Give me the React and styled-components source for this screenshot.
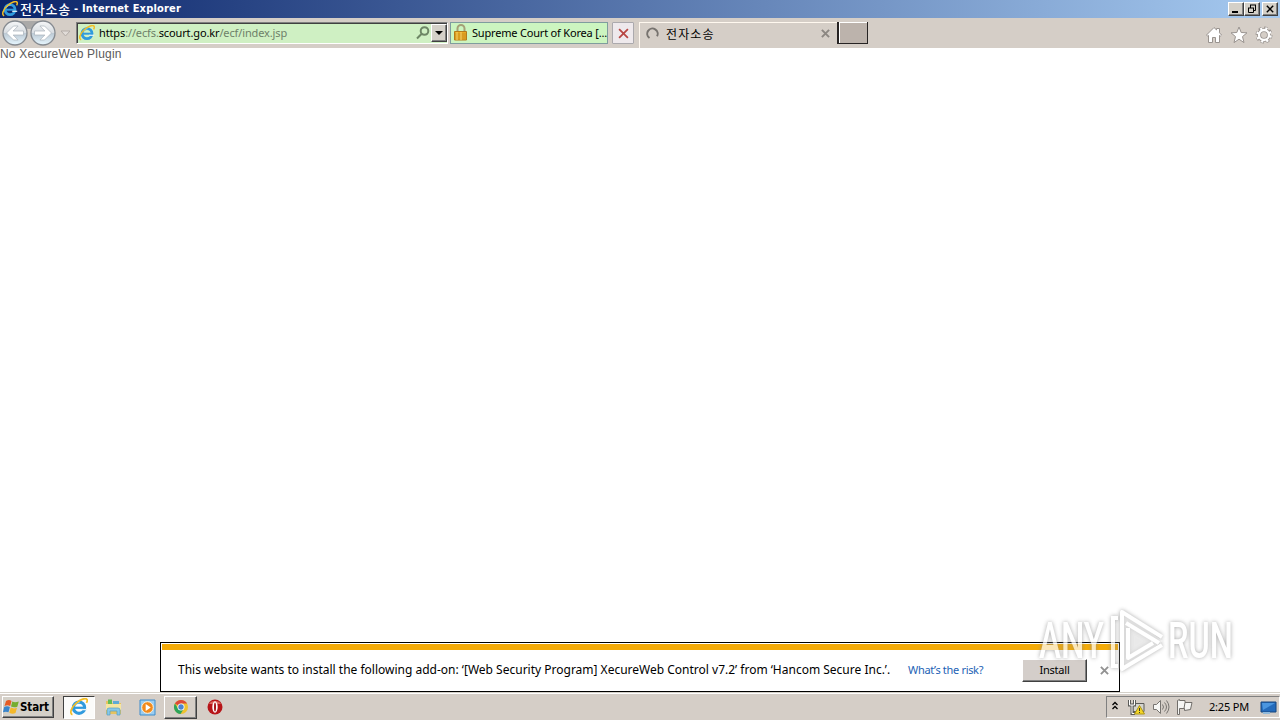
import React from 'react';
import styled, { createGlobalStyle } from 'styled-components';

const uiFont = '"DejaVu Sans Condensed", "DejaVu Sans", "Noto Sans CJK KR", sans-serif';
const textFont = '"Noto Sans", "Noto Sans CJK KR", sans-serif';

const GlobalStyle = createGlobalStyle`
  * {
    box-sizing: border-box;
  }
  body {
    margin: 0;
    overflow: hidden;
    background: #fff;
  }
  button {
    padding: 0;
    font: inherit;
  }
  svg {
    display: block;
    flex: none;
  }
`;

const Screen = styled.div`
  position: relative;
  display: flex;
  flex-direction: column;
  width: 1280px;
  height: 720px;
  overflow: hidden;
  color: #000;
  font: 11px/14px ${textFont};
  white-space: nowrap;
`;

const TitleBar = styled.header`
  display: flex;
  align-items: center;
  flex: none;
  height: 18px;
  padding: 0 2px;
  background: linear-gradient(90deg, #0a246a, #a6caf0);
`;

const Title = styled.h1`
  display: flex;
  flex: 1;
  margin: 0 0 0 2px;
  color: #fff;
  font: bold 11px/18px ${uiFont};
`;

const KoreanTitle = styled.span`
  width: 54px;
  font: 500 13px/17px "Noto Sans CJK KR", sans-serif;
  letter-spacing: 0.8px;
`;

const TitleText = styled.span`
  letter-spacing: ${({ $spacing }) => $spacing}px;
`;

const CaptionButton = styled.button`
  display: grid;
  place-items: center;
  width: 16px;
  height: 14px;
  margin-left: ${({ $gap }) => ($gap ? 2 : 0)}px;
  border: 1px solid;
  border-color: #fff #404040 #404040 #fff;
  background: #d4d0c8;
  box-shadow: inset -1px -1px #808080;
`;

const Toolbar = styled.nav`
  display: flex;
  align-items: center;
  flex: none;
  height: 30px;
  padding: 0 7px 0 2px;
  background: #d5cec7;
`;

const NavButtons = styled.div`
  width: 74px;
  height: 30px;
`;

const AddressBar = styled.div`
  display: flex;
  align-items: center;
  width: 372px;
  height: 22px;
  padding-left: 2px;
  border: 1px solid;
  border-color: #808080 #fff #fff #808080;
  background: #cff0c3;
  box-shadow: inset 1px 1px #404040;
`;

const Url = styled.span`
  flex: 1;
  margin-left: 4px;
  color: #6e7f69;
  font: 11px/16px ${textFont};
  letter-spacing: ${({ $spacing }) => $spacing}px;

  b {
    color: #000;
    font-weight: 400;
  }
`;

const DropButton = styled(CaptionButton)`
  width: 16px;
  height: 18px;
  margin-left: 1px;
`;

const Certificate = styled.div`
  display: flex;
  align-items: center;
  width: 158px;
  height: 22px;
  margin-left: 2px;
  padding-left: 2px;
  border: 1px solid #7f9d9e;
  background: #ccf5c0;
`;

const CertificateText = styled.span`
  margin-left: 3px;
  letter-spacing: ${({ $spacing }) => $spacing}px;
`;

const StopButton = styled.button`
  display: grid;
  place-items: center;
  width: 22px;
  height: 22px;
  margin: 0 5px 0 4px;
  border: 1px solid #aba9ad;
  border-radius: 1px;
  background: #eee9ec;
`;

const Tab = styled.div`
  display: flex;
  align-items: center;
  align-self: flex-end;
  width: 198px;
  height: 26px;
  padding: 0 7px 4px 6px;
  border-top: 1px solid #fff8ef;
  border-left: 1px solid #fff8ef;
`;

const TabTitle = styled.span`
  flex: 1;
  margin-left: 7px;
  font: 12px/16px "Noto Sans CJK KR", sans-serif;
  letter-spacing: 1.1px;
`;

const NewTab = styled.button`
  width: 31px;
  height: 22px;
  border: solid #262323;
  border-width: 0 1px 1px 2px;
  background: #bcb3ac;
  box-shadow: inset 1px 1px #fff;
`;

const Commands = styled.div`
  display: flex;
  gap: 7px;
  margin: 3px 0 0 auto;
`;

const Page = styled.main`
  flex: 1;
  color: #5b5b5b;
  font: 12px/12px "Liberation Sans", sans-serif;
  letter-spacing: 0.2px;
`;

const Notification = styled.section`
  width: 960px;
  height: 50px;
  margin: 0 auto;
  padding: 1px;
  border: 1px solid #000;
  background: #fff;
`;

const Stripe = styled.div`
  height: 6px;
  background: #f4ab08;
`;

const NotificationRow = styled.div`
  display: flex;
  align-items: center;
  height: 40px;
  padding-left: 16px;
`;

const Message = styled.span`
  width: 730px;
  padding-bottom: 1px;
  font: 12px/18px ${textFont};
  letter-spacing: ${({ $spacing }) => $spacing}px;
`;

const Risk = styled.a`
  width: 114px;
  color: #1d62b5;
  font: 11px/16px ${textFont};
  letter-spacing: ${({ $spacing }) => $spacing}px;
`;

const InstallButton = styled.button`
  width: 65px;
  height: 23px;
  margin-right: 13px;
  border: 1px solid;
  border-color: #fff #404040 #404040 #fff;
  background: #d4ceca;
  box-shadow: inset -1px -1px #808080;
  font: 11px/16px ${textFont};
  letter-spacing: -0.2px;
`;

const Taskbar = styled.footer`
  display: flex;
  align-items: center;
  flex: none;
  height: 28px;
  padding-top: 1px;
  border-top: 1px solid #d4d0c8;
  background: #d5cec7;
  box-shadow: inset 0 1px #fff;
`;

const StartButton = styled.button`
  display: flex;
  align-items: center;
  width: 52px;
  height: 22px;
  margin: 0 9px 0 2px;
  padding-left: 0;
  border: 1px solid;
  border-color: #fff #404040 #404040 #fff;
  background: #d4d0c8;
  box-shadow: inset -1px -1px #808080;
  font: bold 11.5px/16px ${uiFont};
  letter-spacing: -0.1px;
`;

const TaskButton = styled.button`
  display: grid;
  place-items: center;
  width: ${({ $width }) => $width}px;
  height: 23px;
  border: 1px solid transparent;
  background: none;
  ${({ $state }) => $state === 'active' && `
    border-color: #404040 #fff #fff #404040;
    background: #fbfbfa;
  `}
  ${({ $state }) => $state === 'open' && `
    border-color: #fff #404040 #404040 #fff;
    box-shadow: inset -1px -1px #808080;
  `}
`;

const Tray = styled.div`
  display: flex;
  align-items: center;
  width: 174px;
  height: 22px;
  margin-left: auto;
  padding-left: 4px;
  border: 1px solid;
  border-color: #808080 #fff #fff #808080;
`;

const Clock = styled.time`
  width: 51px;
  margin-left: 16px;
  letter-spacing: ${({ $spacing }) => $spacing}px;
`;

const Watermark = styled.svg`
  position: absolute;
  top: 602px;
  left: 1030px;
  opacity: 0.72;
  filter: drop-shadow(0 0 2px #888);
`;

const IeIcon = ({ size = 16 }) => (
  <svg width={size} height={size} viewBox="0 0 16 16" fill="none">
    <circle cx="8" cy="8.6" r="5" stroke="#2f9ade" strokeWidth="2.8" />
    <path d="M4 8.7h9.5" stroke="#2f9ade" strokeWidth="2" />
    <path d="M10.2 10.3h5" stroke="#e5f3f7" strokeWidth="1.2" />
    <path d="M4.4 6.3C5.4 4.6 7 3.8 8.5 3.9" stroke="#94dbff" />
    <path d="M2.2 14.8C-.7 14 1 8.3 5.5 4.5 9.3 1.2 14-.5 15.1 1.3c.5.8.1 2-.5 3.1" stroke="#f3bd24" strokeWidth="1.5" />
  </svg>
);

const NavIcon = () => (
  <svg width="74" height="30" viewBox="0 0 74 30">
    <defs>
      <linearGradient id="glass" x2="0" y2="1">
        <stop stopColor="#f6f7f8" />
        <stop offset=".48" stopColor="#d8dde2" />
        <stop offset=".52" stopColor="#bdcad5" />
        <stop offset="1" stopColor="#e7f7ff" />
      </linearGradient>
    </defs>
    <path d="M13 3h29v6q-14 4-29 0z" fill="#aaa9a8" />
    <circle cx="13" cy="15" r="12" fill="url(#glass)" stroke="#858a90" strokeWidth="1.3" />
    <circle cx="41" cy="15" r="12" fill="url(#glass)" stroke="#858a90" strokeWidth="1.3" />
    <g fill="#fff" stroke="#a9b1ba" strokeWidth=".7">
      <path d="M4.500 15l7-7h4.600l-5 5H21.500v4H11.100l5 5H11.500z" />
      <path d="M49.500 15l-7-7h-4.600l5 5H32.500v4h10.400l-5 5h4.600z" />
    </g>
    <path d="M59 13h9l-4.500 5z" fill="#e1dcd8" stroke="#b3aca7" />
  </svg>
);

const Cross = ({ size, color, width = 2 }) => (
  <svg width={size} height={size} viewBox="0 0 10 10">
    <path d="M1 1l8 8M9 1L1 9" stroke={color} strokeWidth={width} />
  </svg>
);

const LockIcon = () => (
  <svg width="16" height="18" viewBox="0 0 16 18">
    <path d="M4.500 8V4.500a3.500 3.500 0 017 0V8" fill="none" stroke="#a5a076" strokeWidth="2" />
    <path d="M1.500 7.500h12V16h-12z" fill="#e9aa22" stroke="#b47b19" />
    <path d="M2 10h11M2 12h11M2 14h11" stroke="#bd841c" strokeWidth=".7" />
    <path d="M4 8v8M8 8v8" stroke="#f9d56d" />
  </svg>
);

const CommandIcons = () => (
  <Commands>
    <svg width="18" height="18" viewBox="0 0 18 18">
      <path d="M1.500 9L9 1.500l2.500 2.400V2.500h3v4.300L16.500 9l-1.200 1.200-.8-.8v7.100h-4v-5h-3v5h-4V9.400l-.8.8z" fill="#fff" stroke="#99938f" />
    </svg>
    <svg width="18" height="18" viewBox="0 0 18 18">
      <path d="M9 1l2.200 5.500 5.800.3-4.500 3.800 1.500 6L9 13.200l-5 3.400 1.500-6L1 6.800l5.800-.3z" fill="#fff" stroke="#99938f" />
    </svg>
    <svg width="18" height="18" viewBox="0 0 18 18" fill="none">
      <circle cx="9" cy="9" r="6.700" stroke="#99938f" strokeWidth="3.500" strokeDasharray="3 2.260" />
      <circle cx="9" cy="9" r="5" stroke="#99938f" strokeWidth="4" />
      <circle cx="9" cy="9" r="6.500" stroke="#fff" strokeWidth="2.600" strokeDasharray="2 3.105" strokeDashoffset="-.5" />
      <circle cx="9" cy="9" r="5" stroke="#fff" strokeWidth="2.300" />
    </svg>
  </Commands>
);

const WindowsIcon = () => (
  <svg width="17" height="17" viewBox="0 0 17 17">
    <path d="M3 2q3-2 5.500-.1L7.200 7Q4.600 5.500 1.500 7z" fill="#e65b24" />
    <path d="M9.300 2.500Q12 4 15.800 2.400L14.300 7.800Q11 9 8 7.500z" fill="#75ad30" />
    <path d="M1.200 8q3-1.500 5.700.1l-1.400 5.200Q3 12-.1 13.300z" fill="#3a85cb" />
    <path d="M7.700 8.600q3 1.500 6.300.2l-1.500 5.300q-3.300 1.300-6.200-.4z" fill="#f4b82a" />
  </svg>
);

const FolderIcon = () => (
  <svg width="17" height="18" viewBox="0 0 17 18">
    <path d="M1 3h5l1 2h9v11H1z" fill="#e7c35f" />
    <path d="M3 1.500h4V6H3z" fill="#63bd55" />
    <path d="M8 3h6v4H8z" fill="#5eabd6" />
    <path d="M1 6h15v6H1z" fill="#f6e6a0" />
    <path d="M2 17v-5q0-2 2-2h9q2 0 2 2v5h-3v-4H5v4z" fill="#87c8e8" stroke="#559fc4" strokeWidth=".7" />
  </svg>
);

const PlayerIcon = () => (
  <svg width="17" height="17" viewBox="0 0 17 17">
    <path d="M1 1h15v15H1z" fill="#9bcdf0" stroke="#3e8dcc" />
    <circle cx="8.500" cy="8.500" r="5.800" fill="#f28a1b" stroke="#fff1d9" />
    <path d="M6.700 5v7l5-3.500z" fill="#fff" />
  </svg>
);

const ChromeIcon = () => (
  <svg width="16" height="16" viewBox="0 0 16 16">
    <circle cx="8" cy="8" r="7" fill="#efc22f" />
    <path d="M8 8L1.900 4.500A7 7 0 0114.100 4.500H8z" fill="#dc4939" />
    <path d="M1.900 4.500A7 7 0 007.500 15L11 9.500 8 8 5 9.500z" fill="#2da45b" />
    <circle cx="8" cy="8" r="3.500" fill="#fff" />
    <circle cx="8" cy="8" r="2.700" fill="#4c84d1" />
  </svg>
);

const OperaIcon = () => (
  <svg width="16" height="16" viewBox="0 0 16 16">
    <circle cx="8" cy="8" r="7.500" fill="#b71519" />
    <path d="M2 5a6.500 5 0 0112 0z" fill="#dd6860" />
    <ellipse cx="8" cy="8" rx="2.700" ry="5.800" fill="#fff" />
    <ellipse cx="8" cy="8" rx="1" ry="4.500" fill="#a61418" />
  </svg>
);

const TrayIcons = () => (
  <svg width="82" height="18" viewBox="0 0 82 18" fill="none">
    <path d="M1.500 7l2.500-2.500L6.500 7M1.500 11L4 8.500 6.500 11" stroke="#000" strokeWidth="1.300" />
    <path d="M22 5.500h11v8H22z" fill="#d4d4ce" stroke="#5b5b58" />
    <path d="M18.500 2v5h5V2M21 7v8.500h3" stroke="#5b5b58" strokeWidth="3" />
    <path d="M18.500 2v5h5V2M21 7v8.500h3" stroke="#fff" />
    <path d="M28.500 7.500l5 8.500h-10z" fill="#f4d525" stroke="#ad9519" />
    <path d="M28.500 10v3M28.500 14v1" stroke="#3b3825" />
    <path d="M42.500 6.500h3l4-4v13l-4-4h-3z" fill="#f7f7f5" stroke="#777470" />
    <path d="M51.500 6.500q2 2.500 0 5M53.500 4.500q4 4.500 0 9M55.500 2.500q5 6.500 0 13" stroke="#777470" />
    <path d="M66.500 2.500v14h2v-6h5v2l6-1 1.500-7h-7v-2h-5.500v-1z" fill="#f5f5f3" stroke="#716e6a" />
    <path d="M74 4.500l-1 6" stroke="#716e6a" />
  </svg>
);

const App = () => (
  <>
    <GlobalStyle />
    <Screen>
      <TitleBar>
        <IeIcon />
        <Title>
          <KoreanTitle>전자소송</KoreanTitle>
          <TitleText $spacing={0.19}>- Internet Explorer</TitleText>
        </Title>
        <CaptionButton aria-label="Minimize">
          <svg width="10" height="10"><path d="M1 8h6" stroke="#000" strokeWidth="2" /></svg>
        </CaptionButton>
        <CaptionButton aria-label="Restore">
          <svg width="10" height="10" fill="none" stroke="#000">
            <path d="M3 1h6M3.500 1v3M8.500 1v5.500h-2M1 4h6M1.500 4v4.500h5V4" />
          </svg>
        </CaptionButton>
        <CaptionButton $gap aria-label="Close"><Cross size={8} color="#000" width={1.8} /></CaptionButton>
      </TitleBar>

      <Toolbar>
        <NavButtons><NavIcon /></NavButtons>
        <AddressBar>
          <IeIcon />
          <Url $spacing={-0.13}>
            <b>https</b>
            ://ecfs.
            <b>scourt.go.kr</b>
            /ecf/index.jsp
          </Url>
          <svg width="14" height="14" viewBox="0 0 14 14" fill="none" stroke="#6d8665" strokeWidth="2">
            <circle cx="8.500" cy="5" r="3.800" />
            <path d="M5.700 7.800L1 12.500" />
          </svg>
          <DropButton aria-label="Show address history">
            <svg width="8" height="5"><path d="M0 0h8L4 4z" /></svg>
          </DropButton>
        </AddressBar>
        <Certificate>
          <LockIcon />
          <CertificateText $spacing={-0.19}>Supreme Court of Korea [...</CertificateText>
        </Certificate>
        <StopButton aria-label="Stop"><Cross size={11} color="#b84643" width={1.6} /></StopButton>
        <Tab>
          <svg width="13" height="13" viewBox="0 0 13 13" fill="none">
            <path d="M3.500 11A5.200 5.200 0 1111 9.300" stroke="#77736f" strokeWidth="2" />
          </svg>
          <TabTitle>전자소송</TabTitle>
          <Cross size={9} color="#8c8782" width={2.2} />
        </Tab>
        <NewTab aria-label="New tab" />
        <CommandIcons />
      </Toolbar>

      <Page>No XecureWeb Plugin</Page>

      <Notification>
        <Stripe />
        <NotificationRow>
          <Message $spacing={0}>
            This website wants to install the following add-on: ‘[Web Security Program] XecureWeb Control v7.2’ from ‘Hancom Secure Inc.’.
          </Message>
          <Risk $spacing={-0.32}>What’s the risk?</Risk>
          <InstallButton>Install</InstallButton>
          <Cross size={9} color="#929292" width={2.1} />
        </NotificationRow>
      </Notification>

      <Taskbar>
        <StartButton>
          <WindowsIcon />
          Start
        </StartButton>
        <TaskButton $width={32} $state="active"><IeIcon size={18} /></TaskButton>
        <TaskButton $width={36}><FolderIcon /></TaskButton>
        <TaskButton $width={33}><PlayerIcon /></TaskButton>
        <TaskButton $width={33} $state="open"><ChromeIcon /></TaskButton>
        <TaskButton $width={35}><OperaIcon /></TaskButton>
        <Tray>
          <TrayIcons />
          <Clock $spacing={-0.2}>2:25 PM</Clock>
          <svg width="17" height="15" viewBox="0 0 17 15">
            <path d="M1 2h15v10H1z" fill="#246bbb" stroke="#17477e" />
            <path d="M2 3h13L3 10z" fill="#4b96df" />
            <path d="M3 13h7" stroke="#8fb9db" strokeWidth="2" />
          </svg>
        </Tray>
      </Taskbar>

      <Watermark width="230" height="90" viewBox="0 0 230 90" fill="#fff">
        <g fontFamily="Roboto, sans-serif" fontSize="50" fontWeight="500">
          <text x="9" y="56" textLength="65" lengthAdjust="spacingAndGlyphs">ANY</text>
          <text x="138" y="56" textLength="65" lengthAdjust="spacingAndGlyphs">RUN</text>
        </g>
        <path d="M88 16h-5v48h5" fill="none" stroke="#fff" strokeWidth="4" />
        <path d="M91 9v61l42-31z" fill="#fff" fillOpacity=".45" />
        <path d="M132 35L92 10v57l40-24M96 21l33 20M98 26v30l25-15" fill="none" stroke="#fff" strokeWidth="4" strokeLinejoin="round" />
      </Watermark>
    </Screen>
  </>
);

export default App;
